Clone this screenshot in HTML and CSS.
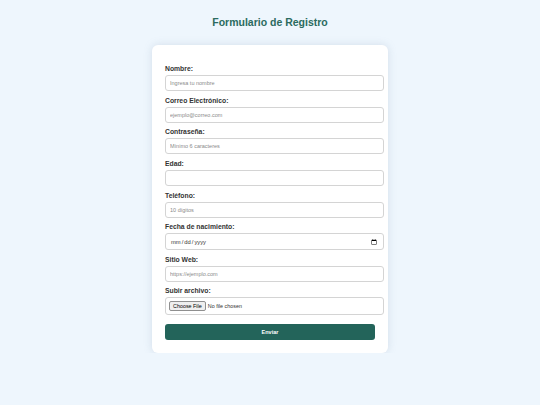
FILE: index.html
```html
<!DOCTYPE html>
<html lang="es">
<head>
<meta charset="utf-8">
<title>Formulario de Registro</title>
<link rel="stylesheet" href="styles.css">
</head>
<body>
  <h1 class="title">Formulario de Registro</h1>
  <form class="card">
    <div class="field">
      <label for="nombre">Nombre:</label>
      <input id="nombre" type="text" placeholder="Ingresa tu nombre">
    </div>
    <div class="field">
      <label for="correo">Correo Electrónico:</label>
      <input id="correo" type="email" placeholder="ejemplo@correo.com">
    </div>
    <div class="field">
      <label for="clave">Contraseña:</label>
      <input id="clave" type="password" placeholder="Mínimo 6 caracteres">
    </div>
    <div class="field">
      <label for="edad">Edad:</label>
      <input id="edad" type="number">
    </div>
    <div class="field">
      <label for="telefono">Teléfono:</label>
      <input id="telefono" type="tel" placeholder="10 dígitos">
    </div>
    <div class="field">
      <label for="fecha">Fecha de nacimiento:</label>
      <input id="fecha" class="date" type="date">
    </div>
    <div class="field">
      <label for="web">Sitio Web:</label>
      <input id="web" type="url" placeholder="https://ejemplo.com">
    </div>
    <div class="field">
      <label for="archivo">Subir archivo:</label>
      <input id="archivo" class="file" type="file">
    </div>
    <button type="button" class="submit">Enviar</button>
  </form>
</body>
</html>
```

FILE: styles.css
```css
* {
  box-sizing: border-box;
}

html, body {
  margin: 0;
  padding: 0;
}

body {
  background: #eef6fd;
  font-family: "Liberation Sans", Arial, sans-serif;
  color: #333;
}

.title {
  margin: 0;
  padding-top: 16px;
  height: 45px;
  font-size: 10.5px;
  line-height: 13px;
  text-align: center;
  color: #2b6b5f;
}

.card {
  width: 236px;
  margin: 0 auto;
  padding: 19px 13px 13px;
  background: #fff;
  border-radius: 6px;
  box-shadow: 0 0 8px rgba(120, 140, 170, 0.22);
}

.field {
  margin-bottom: 4.7px;
}

.field label {
  display: block;
  font-size: 6.8px;
  line-height: 10px;
  font-weight: bold;
  color: #333;
  margin-bottom: 1px;
}

.field input {
  display: block;
  width: calc(100% + 9px);
  height: 16px;
  padding: 0 4px;
  border: 1px solid #d4d4d4;
  border-radius: 3px;
  background: #fff;
  font-family: "Liberation Sans", Arial, sans-serif;
  font-size: 5.5px;
  color: #333;
  outline: none;
}

.field input::placeholder {
  color: #8a8a8a;
}

.field input.date {
  height: 16.5px;
  font-size: 5.8px;
}

.field input.file {
  height: 18px;
  padding: 0 3px;
  font-size: 5.4px;
  line-height: 16px;
}

.field input.file::file-selector-button {
  font-size: 5.4px;
  padding: 1px 3px;
  margin-right: 2px;
  border: 1px solid #8f8f8f;
  border-radius: 2px;
  background: #efefef;
}

.submit {
  display: block;
  width: 100%;
  height: 16px;
  margin-top: 9px;
  padding: 0;
  border: none;
  border-radius: 3px;
  background: #23645a;
  color: #fff;
  font-family: "Liberation Sans", Arial, sans-serif;
  font-size: 5.5px;
  font-weight: bold;
}
```
